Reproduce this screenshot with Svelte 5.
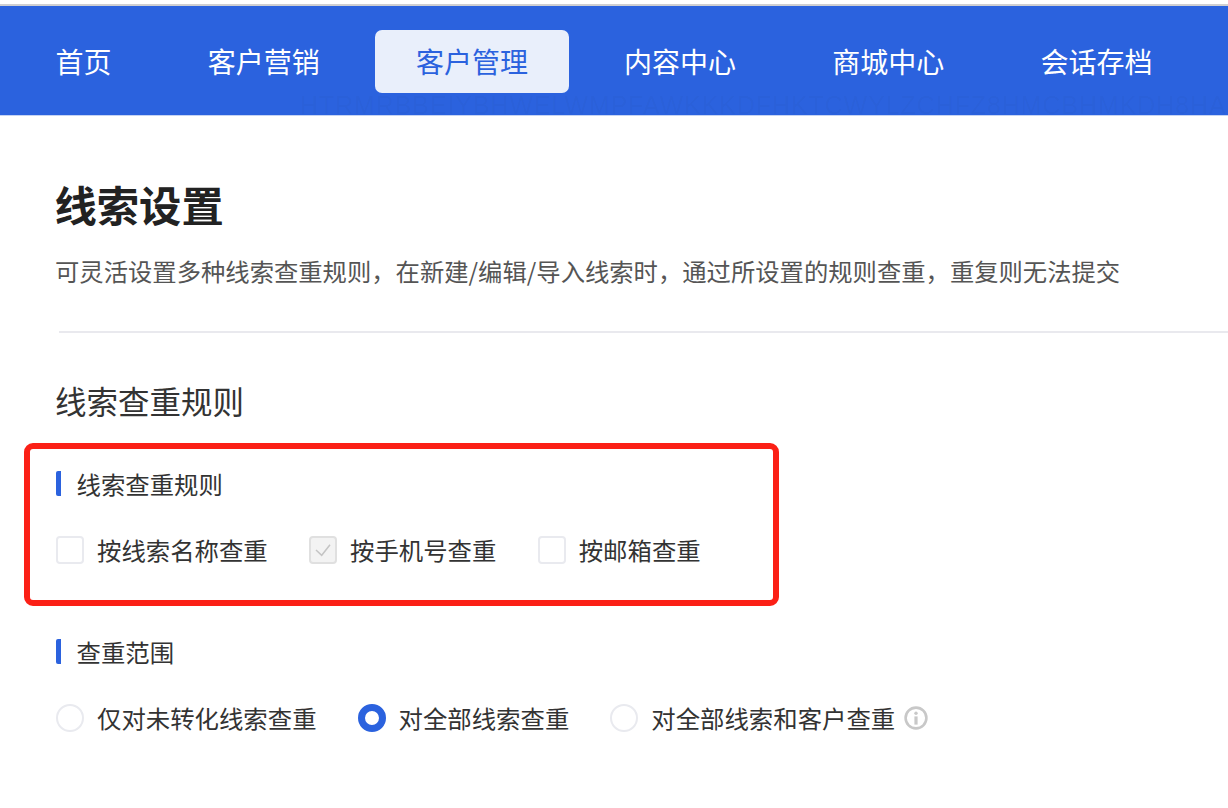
<script lang="ts">
	const navItems = ['首页', '客户营销', '客户管理', '内容中心', '商城中心', '会话存档'];
	const activeNav = '客户管理';

	const dupRules = [
		{ label: '按线索名称查重', checked: false },
		{ label: '按手机号查重', checked: true },
		{ label: '按邮箱查重', checked: false }
	];

	const scopes = [
		{ label: '仅对未转化线索查重', selected: false, info: false },
		{ label: '对全部线索查重', selected: true, info: false },
		{ label: '对全部线索和客户查重', selected: false, info: true }
	];

	// faint image watermark along the bottom of the nav bar
	const watermark = 'HTRMRBBEIYBHWELWMPFAWKKKDFHKTCWYLZCHFZ8HMCBHMKDH8HA';
</script>

<div class="page">
	<nav class="topnav">
		{#each navItems as item}
			<a class="nav-item" class:active={item === activeNav} href="#top">{item}</a>
		{/each}
		<span class="watermark" aria-hidden="true">{watermark}</span>
	</nav>

	<main class="content">
		<h1>线索设置</h1>
		<p class="desc">可灵活设置多种线索查重规则，在新建/编辑/导入线索时，通过所设置的规则查重，重复则无法提交</p>
		<hr />
		<h2>线索查重规则</h2>

		<section class="rule-block">
			<h3>线索查重规则</h3>
			<div class="options checks">
				{#each dupRules as rule}
					<div class="option">
						<span class="checkbox" class:checked={rule.checked}>
							{#if rule.checked}
								<svg width="16" height="16" viewBox="0 0 16 16" fill="none" stroke="#c4c4c4" stroke-width="1.5" aria-hidden="true">
									<polyline points="1 8 6.7 13.3 15 2.7"></polyline>
								</svg>
							{/if}
						</span>
						<span>{rule.label}</span>
					</div>
				{/each}
			</div>
			<div class="annotation"></div>
		</section>

		<section class="rule-block scope">
			<h3>查重范围</h3>
			<div class="options">
				{#each scopes as scope}
					<div class="option">
						<span class="radio" class:selected={scope.selected}></span>
						<span>{scope.label}</span>
						{#if scope.info}
							<svg class="info" width="24" height="24" viewBox="0 0 24 24" fill="none" aria-hidden="true">
								<circle cx="12" cy="12" r="10.4" stroke="#c8c8c8" stroke-width="2.6"></circle>
								<circle cx="12" cy="7.2" r="1.7" fill="#c8c8c8"></circle>
								<rect x="10.4" y="10.4" width="3.2" height="8.2" fill="#c8c8c8"></rect>
							</svg>
						{/if}
					</div>
				{/each}
			</div>
		</section>
	</main>
</div>

<style>
	:global(body) {
		background: #fff;
		font-family: "Noto Sans CJK SC", "Noto Sans", sans-serif;
	}

	.page {
		height: 808px;
		overflow: hidden;
		padding-top: 4px;
		box-sizing: border-box;
	}

	.topnav {
		position: relative;
		display: flex;
		align-items: center;
		gap: 14.2px;
		height: 112px;
		padding: 2px 0 0 14.5px;
		box-sizing: border-box;
		background: #2b62de;
		border-top: 2px solid #cfcfd1;
		border-bottom: 1px solid #c5d3f3;
	}

	.nav-item {
		display: block;
		height: 63px;
		padding: 0 41px;
		border-radius: 7px;
		color: #fff;
		font-size: 28px;
		line-height: 63px;
		text-decoration: none;
	}

	.nav-item.active {
		background: #e9effb;
		color: #2b62de;
	}

	.watermark {
		position: absolute;
		left: 300px;
		bottom: 0;
		color: rgba(20, 40, 90, 0.045);
		font-family: "Liberation Sans", sans-serif;
		font-size: 25px;
		line-height: 19px;
		letter-spacing: 0.9px;
		white-space: nowrap;
		pointer-events: none;
	}

	.content {
		padding: 60px 0 0 56px;
	}

	h1 {
		margin: 0 0 0 -1.5px;
		color: #222;
		font-size: 42.3px;
		font-weight: 700;
		line-height: 56px;
	}

	.desc {
		margin: 21px 0 0 -1px;
		color: #555;
		font-size: 24.34px;
		line-height: 36px;
		white-space: nowrap;
	}

	hr {
		margin: 42px 0 0 3px;
		border: 0;
		border-top: 2px solid #e9e9ee;
	}

	h2 {
		margin: 44px 0 0 -1px;
		color: #333;
		font-size: 31.5px;
		font-weight: 400;
		line-height: 46px;
	}

	.rule-block {
		position: relative;
		margin-top: 48px;
	}

	.rule-block.scope {
		margin-top: 69px;
	}

	h3 {
		margin: 0;
		padding-left: 15.5px;
		border-left: 5px solid #2b62de;
		border-radius: 2px;
		color: #333;
		font-size: 24.4px;
		font-weight: 400;
		line-height: 25px;
	}

	.options {
		display: flex;
		align-items: center;
		gap: 41px;
		margin-top: 34px;
		color: #333;
		font-size: 24.4px;
		line-height: 40px;
	}

	.options.checks {
		gap: 41.3px;
	}

	.option {
		display: flex;
		align-items: center;
	}

	.checkbox,
	.radio {
		flex: none;
		box-sizing: border-box;
		display: flex;
		align-items: center;
		justify-content: center;
		width: 28px;
		height: 28px;
		margin-right: 13px;
		border: 2px solid #e9eaef;
		background: #fff;
	}

	.checkbox {
		border-radius: 4px;
	}

	.checkbox.checked {
		border-color: #e0e0e0;
		background: #f3f3f3;
	}

	.radio {
		border-radius: 50%;
	}

	.radio.selected {
		border: 7.5px solid #2b62de;
	}

	.info {
		margin-left: 9px;
	}

	.annotation {
		position: absolute;
		left: -32px;
		top: -28px;
		width: 755px;
		height: 163px;
		box-sizing: border-box;
		border: 6px solid #fb2016;
		border-radius: 9px;
		pointer-events: none;
	}
</style>
